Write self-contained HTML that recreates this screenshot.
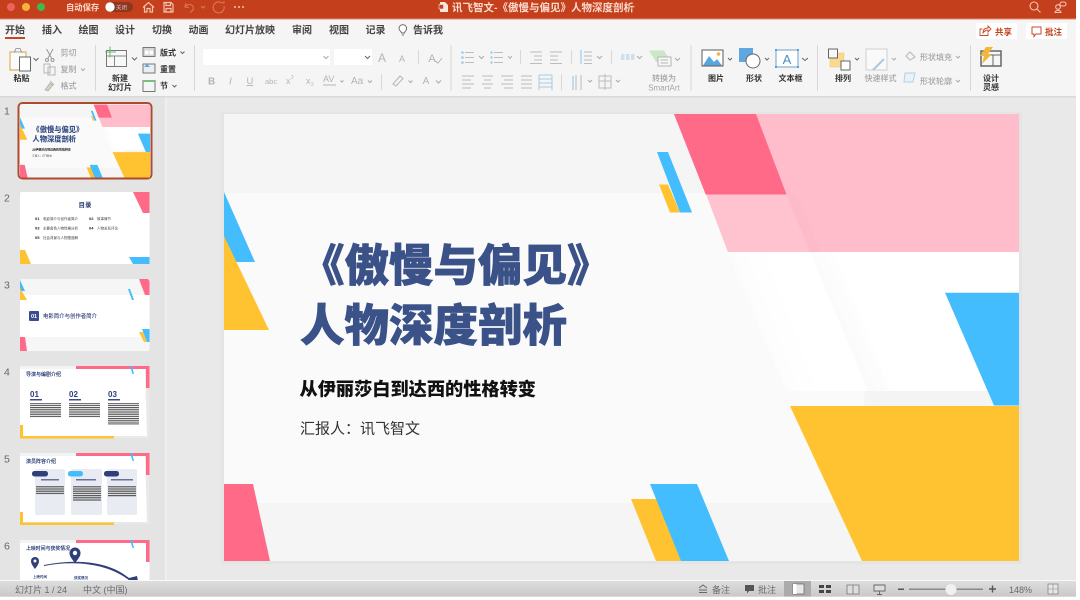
<!DOCTYPE html>
<html lang="zh-CN">
<head>
<meta charset="utf-8">
<title>讯飞智文</title>
<style>
html,body{margin:0;padding:0;width:1080px;height:600px;overflow:hidden;background:#fff}
svg{display:block;position:absolute;left:0;top:0}
text{font-family:"Liberation Sans","Noto Sans CJK SC",sans-serif}
.ui{filter:blur(.35px)}
.soft{filter:blur(.3px)}
.tab{font-size:10px;fill:#444;font-weight:700}
.lb{font-size:8px;fill:#333;font-weight:700;text-anchor:middle}
.gr{font-size:8px;fill:#a4a4a4;font-weight:500}
.ic{fill:none;stroke:#9a9a9a;stroke-width:1}
.lt{fill:none;stroke:#b5b5b5;stroke-width:1}
.dk{fill:none;stroke:#666;stroke-width:1}
.ch{fill:none;stroke:#666;stroke-width:1}
.chl{fill:none;stroke:#aaa;stroke-width:1}
.sep{stroke:#d8d8d8;stroke-width:1;fill:none}
.st{font-size:9px;fill:#6a6a6a}
.th{font-weight:700;fill:#2f3f78}
</style>
</head>
<body>
<svg width="1080" height="600" viewBox="0 0 1080 600" xmlns="http://www.w3.org/2000/svg">
<defs>
<linearGradient id="sb" x1="0" y1="0" x2="0" y2="1"><stop offset="0" stop-color="#dedede"/><stop offset="1" stop-color="#c9c9c9"/></linearGradient>
<linearGradient id="wg" gradientUnits="userSpaceOnUse" x1="725" y1="330" x2="790" y2="305"><stop offset="0" stop-color="#fafafb"/><stop offset="1" stop-color="#ffffff"/></linearGradient>
<linearGradient id="sh" gradientUnits="userSpaceOnUse" x1="812" y1="330" x2="868" y2="305"><stop offset="0" stop-color="#f7f7f7"/><stop offset="1" stop-color="#ffffff"/></linearGradient>
<pattern id="tl" width="3" height="2.200" patternUnits="userSpaceOnUse"><rect width="3" height="1.200" fill="#555"/></pattern>
<clipPath id="c6"><rect x="20" y="540" width="129.500" height="41"/></clipPath>
</defs>

<rect width="1076" height="597" fill="#e9e9e9"/>

<!-- main slide -->
<rect x="221" y="112" width="801" height="452" fill="#e3e3e3" opacity=".7" class="ui"/>
<g>
<rect x="224" y="114" width="795" height="447" fill="#f5f5f6"/>
<rect x="224" y="193" width="640" height="310" fill="#fafafb"/>
<polygon points="674,114 1019,114 1019,252 728,252 706,194" fill="#ffbccb"/>
<polygon points="706,194 786,194 810,252 728,252" fill="#ffc2cf"/>
<polygon points="787,194 797,194 820,252 810,252" fill="#fcb9c8" opacity=".6"/>
<polygon points="674,114 756,114 786.5,194.5 705.7,194.5" fill="#ff6a88"/>
<polygon points="728,252 1019,252 1019,391 786,391" fill="url(#wg)"/>
<polygon points="810,252 835,252 890,391 868,391" fill="url(#sh)"/>
<polygon points="866,391 1019,391 1019,406 873,406" fill="#f4f4f5"/>
<polygon points="945,292.700 1019,292.700 1019,405.500 994,405.500" fill="#44bdff"/>
<polygon points="790,406 1019,406 1019,561 862,561" fill="#ffc331"/>
<polygon points="631,499 660,499 681,561 656,561" fill="#ffc331"/>
<polygon points="650,484 697,484 729,561 681,561" fill="#44bdff"/>
<polygon points="659,184.500 668,184.500 680,212.500 670,212.500" fill="#ffc331"/>
<polygon points="657,152 668,152 692,212.500 680,212.500" fill="#44bdff"/>
<polygon points="224,192 255,262 224,262" fill="#44bdff"/>
<polygon points="224,236 269,330 224,330" fill="#ffc331"/>
<polygon points="224,484 253,484 270,561 224,561" fill="#ff6a88"/>
<g class="soft">
<g font-weight="900" fill="#3a5288" stroke="#3a5288" stroke-width=".7" font-size="44.500">
<text x="300" y="281">《傲慢与偏见》</text>
<text x="300" y="341">人物深度剖析</text>
</g>
<text x="299.500" y="395.500" font-size="18.200" font-weight="900" fill="#111">从伊丽莎白到达西的性格转变</text>
<text x="300" y="433.500" font-size="15" fill="#333">汇报人<tspan style="font-family:'Noto Sans CJK TC',sans-serif">：</tspan>讯飞智文</text>
</g>
</g>

<g class="ui">
<!-- title bar -->
<rect width="1076" height="18.500" fill="#c43f1b"/>
<rect y="18.500" width="1076" height="1" fill="#e98a6d"/>
<circle cx="11" cy="7" r="4" fill="#f0625c"/>
<circle cx="26" cy="7" r="4" fill="#f5b33b"/>
<circle cx="41" cy="7" r="4" fill="#3fb94d"/>
<text x="66" y="10.500" font-size="8.300" fill="#ffd9cb" font-weight="700">自动保存</text>
<rect x="105" y="2" width="28" height="10" rx="5" fill="#8c3722"/>
<circle cx="110" cy="7" r="4.700" fill="#fff"/>
<text x="116" y="9.300" font-size="5.500" fill="#e9c7bb">关闭</text>
<g fill="none" stroke="#f6c3b0" stroke-width="1.200">
<path d="M143 7.500 L148.500 2.500 L154 7.500 M144.500 6.500 V12 H147 V8.500 H150 V12 H152.500 V6.500"/>
<path d="M164 2.500 H171 L173 4.500 V12 H164 Z M166 2.500 V5.500 H170.500 V2.500 M166 12 V8.500 H171 V12"/>
</g>
<g fill="none" stroke="#d9795a" stroke-width="1.100">
<path d="M186 3 L185 7 L189 7.500 M185.500 6.500 C189 2.500 195 5 193 10 L190 12.500"/>
<path d="M201 6 L203 8 L205 6"/>
<path d="M224 6 A5.500 5.500 0 1 1 222 3 L224 3 M224 1 V3.500"/>
</g>
<g fill="#f4c5b4"><circle cx="235" cy="7" r="1"/><circle cx="239" cy="7" r="1"/><circle cx="243" cy="7" r="1"/></g>
<path d="M440 2 H445 L448 5 V12 H440 Z" fill="#fbe6dd"/>
<rect x="439" y="4.500" width="4.500" height="4.500" fill="#c43f1b" stroke="#fbe6dd" stroke-width=".6"/>
<text x="452" y="10.800" font-size="10.500" fill="#fbdccf" font-weight="700">讯飞智文-《傲慢与偏见》人物深度剖析</text>
<path d="M629 6 L632 8.500 L635 6" fill="none" stroke="#d9795a"/>
<g fill="none" stroke="#f4c5b4" stroke-width="1.100">
<circle cx="1034" cy="6" r="4"/><path d="M1037 9 L1040.500 12.500"/>
<circle cx="1058" cy="7" r="2.300"/><path d="M1055 12.500 C1055 9.800 1061 9.800 1061 12.500 Z"/>
<rect x="1060" y="2" width="6" height="4" rx="2"/>
</g>

<!-- ribbon -->
<rect y="19.500" width="1076" height="77" fill="#f5f5f5"/>
<rect y="96" width="1076" height="1.500" fill="#d9d9d9"/>
<text x="5" y="33.500" class="tab">开始</text>
<text x="42" y="33.500" class="tab">插入</text>
<text x="78.500" y="33.500" class="tab">绘图</text>
<text x="115" y="33.500" class="tab">设计</text>
<text x="152" y="33.500" class="tab">切换</text>
<text x="188.500" y="33.500" class="tab">动画</text>
<text x="225" y="33.500" class="tab">幻灯片放映</text>
<text x="292" y="33.500" class="tab">审阅</text>
<text x="329" y="33.500" class="tab">视图</text>
<text x="365.500" y="33.500" class="tab">记录</text>
<text x="413" y="33.500" class="tab">告诉我</text>
<rect x="5" y="37" width="20" height="2" fill="#c8452a"/>
<path d="M402 35 H404 M401.500 33 C401.500 31 399 31 399 28.500 A3.800 3.800 0 1 1 406.600 28.500 C406.600 31 404.500 31 404.500 33 Z" fill="#fff" stroke="#666" stroke-width=".9"/>

<rect x="976" y="23" width="41" height="16" fill="#fff" rx="1"/>
<rect x="1026" y="23" width="41" height="16" fill="#fff" rx="1"/>
<path d="M982.500 29 H980 V35.500 H988 V33 M983 33 C983 29.500 985 28 988 28 V26 L991 29 L988 32 V30 C986 30 984.500 31 983 33Z" fill="none" stroke="#c8492c" stroke-width=".9"/>
<text x="995" y="35" font-size="8.500" font-weight="700" fill="#c4401c">共享</text>
<path d="M1032 27 H1041 V34 H1036 L1034 36.500 V34 H1032 Z" fill="none" stroke="#c8492c" stroke-width="1"/>
<text x="1045" y="35" font-size="8.500" font-weight="700" fill="#c4401c">批注</text>

<line class="sep" x1="95.500" y1="45" x2="95.500" y2="91"/>
<line class="sep" x1="194.500" y1="45" x2="194.500" y2="91"/>
<line class="sep" x1="451" y1="45" x2="451" y2="91"/>
<line class="sep" x1="691" y1="45" x2="691" y2="91"/>
<line class="sep" x1="817.500" y1="45" x2="817.500" y2="91"/>
<line class="sep" x1="970.500" y1="45" x2="970.500" y2="91"/>

<!-- clipboard -->
<path d="M10 52 H15 L16 50 H20 L21 52 H26 V70 H10 Z" fill="#fbfbfb" stroke="#e5b05a" stroke-width="1.200"/>
<path d="M14.500 52 L16 48.500 H20 L21.500 52 Z" fill="#f4f4f4" stroke="#888" stroke-width=".8"/>
<rect x="19.500" y="57" width="11" height="14" fill="#fff" stroke="#666" stroke-width="1"/>
<path class="ch" d="M33.500 58 L36 60.500 L38.500 58"/>
<text class="lb" x="21.500" y="81">粘贴</text>
<path class="ic" d="M46.500 49 L52 59 M53 49 L47.500 59"/><circle class="ic" cx="47" cy="60" r="1.500"/><circle class="ic" cx="52.500" cy="60" r="1.500"/>
<path class="lt" d="M44 64 H50 V73 H44 Z M48 67 H55 V75 H48 Z"/>
<path d="M45 90 L50 83 L53 85 L48 91 Z" fill="#d9d0b8" stroke="#aaa" stroke-width=".7"/><path class="lt" d="M50 81 L54 85"/>
<text class="gr" x="60.500" y="55.500">剪切</text>
<text class="gr" x="60.500" y="72">复制</text>
<text class="gr" x="60.500" y="88.500">格式</text>
<path class="chl" d="M81 68.500 L83 70.500 L85 68.500"/>

<!-- new slide -->
<rect x="106.500" y="50.500" width="20" height="16" fill="#f8f8f8" stroke="#777" stroke-width="1"/>
<path d="M106.500 56 H126.500 M114.500 56 V66.500" stroke="#888" fill="none"/>
<path d="M110 46.500 V57.500 M105 52 H116" stroke="#6cc070" stroke-width="1.100"/>
<path class="ch" d="M132 57.500 L134.500 60 L137 57.500"/>
<text class="lb" x="120" y="81">新建</text>
<text class="lb" x="120" y="90">幻灯片</text>
<rect x="143" y="47.500" width="12" height="9" fill="#d5d5d5" stroke="#777"/>
<rect x="145" y="50.500" width="3.500" height="4" fill="#fff"/><rect x="149.500" y="50.500" width="3.500" height="4" fill="#fff"/>
<rect x="143" y="64" width="12" height="9" fill="#e8eef2" stroke="#777"/>
<path d="M144 67 L147 64 L150 67 Z" fill="#57a9db"/>
<rect x="143" y="80.500" width="12" height="11" fill="#f4f4f4" stroke="#777"/>
<rect x="143" y="80" width="12" height="2" fill="#74c07c"/>
<text x="160" y="55.500" font-size="8" font-weight="700" fill="#333">版式</text>
<text x="160" y="72" font-size="8" font-weight="700" fill="#333">重置</text>
<text x="160" y="88.500" font-size="8" font-weight="700" fill="#333">节</text>
<path class="ch" d="M180.500 51.500 L182.500 53.500 L184.500 51.500"/>
<path class="ch" d="M172.500 85 L174.500 87 L176.500 85"/>

<!-- font -->
<rect x="203" y="49" width="127" height="16" rx="1.500" fill="#fff"/>
<rect x="334" y="49" width="38" height="16" rx="1.500" fill="#fff"/>
<path class="chl" d="M323.500 56 L326 58.500 L328.500 56"/>
<path class="ch" d="M365 56 L367.500 58.500 L370 56"/>
<g fill="#b4b4b4">
<text x="378" y="62" font-size="12">A</text>
<text x="399" y="62" font-size="9">A</text>
<text x="208" y="84.500" font-size="10" font-weight="700">B</text>
<text x="229" y="84.500" font-size="10" font-style="italic">I</text>
<text x="246.500" y="84" font-size="9.500" text-decoration="underline">U</text>
<text x="265" y="84" font-size="7.500">abc</text>
<text x="286" y="84" font-size="9">x</text><text x="291" y="79" font-size="5">2</text>
<text x="306" y="84" font-size="9">x</text><text x="311" y="86" font-size="5">2</text>
<text x="323" y="82" font-size="9">AV</text>
<text x="351" y="84" font-size="10">Aa</text>
<text x="426" y="84" font-size="10" text-anchor="middle">A</text>
<text x="432" y="62" font-size="11" text-anchor="middle">A</text>
</g>
<path class="lt" d="M323 85 H336"/>
<path class="chl" d="M340.500 80.500 L342 82 L343.500 80.500"/>
<path class="chl" d="M368 80.500 L370 82.500 L372 80.500"/>
<path class="sep" d="M418.500 50 V64 M381.500 74 V90"/>
<path class="lt" d="M393 84 L400 76 L403 78.500 L396 86 Z"/>
<path class="chl" d="M408.500 80.500 L410.500 82.500 L412.500 80.500"/>
<path class="chl" d="M436 80.500 L438.500 83 L441 80.500"/>
<path class="lt" d="M434 60 L438 63 L442 58"/>

<!-- paragraph -->
<g stroke="#bcbcbc" stroke-width="1" fill="none">
<path d="M465 52.500 H474 M465 57.500 H474 M465 62.500 H474"/>
<path d="M494 52.500 H503 M494 57.500 H503 M494 62.500 H503"/>
<path d="M530 52 H542 M534 56 H542 M534 60 H542 M530 63.500 H542"/>
<path d="M550 52 H562 M550 56 H558 M550 60 H558 M550 63.500 H562"/>
<path d="M584 52 H592 M584 56 H592 M584 60 H592 M584 63.500 H592"/>
<path d="M462 76 H474 M462 80 H471 M462 84 H474 M462 88 H471"/>
<path d="M482 76 H493 M484 80 H491 M482 84 H493 M484 88 H491"/>
<path d="M501 76 H513 M504 80 H513 M501 84 H513 M504 88 H513"/>
<path d="M521 76 H532 M521 80 H532 M521 84 H532 M521 88 H532"/>
<path d="M576 75 V90 M581 90 V75"/>
<rect x="599" y="76" width="12" height="12"/><path d="M605 74 V90 M599 81 H611"/>
</g>
<g fill="#9ccbe9"><circle cx="462.500" cy="52.500" r="1.300"/><circle cx="462.500" cy="57.500" r="1.300"/><circle cx="462.500" cy="62.500" r="1.300"/><circle cx="491.500" cy="52.500" r="1.200"/><circle cx="491.500" cy="57.500" r="1.200"/><circle cx="491.500" cy="62.500" r="1.200"/></g>
<path d="M539 75 H552 M539 79 H552 M539 83 H552 M539 87 H552 M539 75 V90 M552 75 V90" stroke="#a6cbe4" fill="none"/>
<path d="M581 50 V64" stroke="#8cc4e6"/>
<path d="M573 76 V90" stroke="#8cc4e6"/>
<g class="chl"><path d="M479 56 L481.500 58.500 L484 56"/><path d="M508 56 L510 58.500 L512 56"/><path d="M597 56 L599.500 58.500 L602 56"/><path d="M588 80 L590 82 L592 80"/><path d="M616 80 L618 82 L620 80"/><path d="M637 56 L639.500 58.500 L642 56"/></g>
<path class="sep" d="M520.500 50 V64 M571.500 50 V64 M611.500 50 V64 M561.500 74 V90"/>
<g fill="#cfe0ec"><rect x="621" y="54" width="3.500" height="6"/><rect x="626" y="54" width="3.500" height="6"/><rect x="631" y="54" width="3.500" height="6"/></g>
<path d="M649 50.500 H664 L671 62 H656 Z" fill="#cde5c9"/>
<rect x="658" y="57" width="13" height="9" fill="#f7f7f7" stroke="#b5b5b5"/>
<path class="lt" d="M660.500 60 H668 M660.500 63 H668"/>
<path class="chl" d="M675 58 L677.500 60.500 L680 58"/>
<text class="gr" x="664" y="81" text-anchor="middle">转换为</text>
<text class="gr" x="664" y="90.500" text-anchor="middle">SmartArt</text>

<!-- insert -->
<rect x="702" y="50" width="21" height="16" fill="#fff" stroke="#5a5a5a"/>
<path d="M703 65.500 L709 56 L714 62 L717 59 L722 65.500 Z" fill="#5aa6dc"/>
<circle cx="718.500" cy="54" r="1.800" fill="#f2b04a"/>
<path class="ch" d="M728 58 L730 60 L732 58"/>
<text class="lb" x="716" y="81">图片</text>
<rect x="739" y="48" width="14" height="14" fill="#5ea7e0"/>
<circle cx="753" cy="61" r="7" fill="#fff" stroke="#666"/>
<path class="ch" d="M765 58 L767 60 L769 58"/>
<text class="lb" x="754" y="81">形状</text>
<rect x="776" y="50" width="22" height="17" fill="#fff" stroke="#6aa2cc"/>
<g fill="#5b9fd4"><rect x="775" y="49" width="2" height="2"/><rect x="797" y="49" width="2" height="2"/><rect x="775" y="66" width="2" height="2"/><rect x="797" y="66" width="2" height="2"/></g>
<text x="787" y="64" font-size="13" text-anchor="middle" fill="#4a8fc9">A</text>
<path class="ch" d="M802 58 L805 60.500 L808 58"/>
<text class="lb" x="790.500" y="81">文本框</text>

<!-- arrange -->
<rect x="830" y="53" width="14" height="14" fill="#f8d98f" stroke="#e9c56e" stroke-width=".5"/>
<rect x="828.500" y="49" width="9" height="9" fill="#f7f7f7" stroke="#666"/>
<rect x="841" y="61" width="9" height="9" fill="#fff" stroke="#666"/>
<path class="ch" d="M855 58 L857 60 L859 58"/>
<text class="lb" x="843" y="81">排列</text>
<rect x="866" y="49" width="21" height="21" fill="#f9f9f9" stroke="#cfcfcf"/>
<path d="M873 70 L884 59" stroke="#a9c9e3" stroke-width="2"/>
<path class="chl" d="M892 58 L894 60 L896 58"/>
<text class="gr" x="880.500" y="81" text-anchor="middle">快速样式</text>
<path class="lt" d="M906 56 L910 52 L915 57 L910 60 Z"/>
<path d="M905 73 H915 L913 82 H904 Z" fill="#e9f2f8" stroke="#b7cfdf"/>
<text class="gr" x="920" y="60">形状填充</text>
<text class="gr" x="920" y="84">形状轮廓</text>
<path class="chl" d="M956 56 L958 58 L960 56"/>
<path class="chl" d="M956 80 L958 82 L960 80"/>

<!-- designer -->
<rect x="981" y="51" width="20" height="15" fill="#f7f7f7" stroke="#666" stroke-width="1.500"/>
<path d="M981 55 H1001 M993 55 V66" stroke="#666"/>
<path d="M986 47 H993 L988 54 H992 L982 64 L984 56 H980 Z" fill="#f3b63d"/>
<text class="lb" x="991" y="81">设计</text>
<text class="lb" x="991" y="90">灵感</text>

<!-- sidebar -->
<rect y="97.500" width="165" height="484" fill="#e4e4e4"/>
<rect x="165" y="97.500" width="2" height="484" fill="#efefef"/>
<g font-size="10.500" fill="#666">
<text x="4" y="114.500">1</text><text x="4" y="201.500">2</text><text x="4" y="288.500">3</text><text x="4" y="375.500">4</text><text x="4" y="462.500">5</text><text x="4" y="549.500">6</text>
</g>

<!-- thumb 1 -->
<rect x="18.500" y="103" width="133" height="75.500" rx="4" fill="#fff" stroke="#ae4a2e" stroke-width="2"/>
<svg x="20" y="104.500" width="130" height="73" viewBox="224 114 795 447" preserveAspectRatio="none">
<rect x="224" y="114" width="795" height="447" fill="#f5f5f6"/>
<rect x="224" y="193" width="640" height="310" fill="#fafafb"/>
<polygon points="674,114 1019,114 1019,252 728,252 706,194" fill="#ffbccb"/>
<polygon points="674,114 756,114 786.500,194.500 705.700,194.500" fill="#ff6a88"/>
<polygon points="728,252 1019,252 1019,391 786,391" fill="url(#wg)"/>
<polygon points="866,391 1019,391 1019,406 873,406" fill="#f4f4f5"/>
<polygon points="945,292.700 1019,292.700 1019,405.500 994,405.500" fill="#44bdff"/>
<polygon points="790,406 1019,406 1019,561 862,561" fill="#ffc331"/>
<polygon points="631,499 660,499 681,561 656,561" fill="#ffc331"/>
<polygon points="650,484 697,484 729,561 681,561" fill="#44bdff"/>
<polygon points="659,184.500 668,184.500 680,212.500 670,212.500" fill="#ffc331"/>
<polygon points="657,152 668,152 692,212.500 680,212.500" fill="#44bdff"/>
<polygon points="224,192 255,262 224,262" fill="#44bdff"/>
<polygon points="224,236 269,330 224,330" fill="#ffc331"/>
<polygon points="224,484 253,484 270,561 224,561" fill="#ff6a88"/>
<g font-weight="900" fill="#3a5288" font-size="44.500"><text x="300" y="281">《傲慢与偏见》</text><text x="300" y="341">人物深度剖析</text></g>
<text x="299" y="395" font-size="18.200" font-weight="700" fill="#111">从伊丽莎白到达西的性格转变</text>
<text x="300" y="433" font-size="15" fill="#333">汇报人：讯飞智文</text>
</svg>

<!-- thumb 2 -->
<rect x="20" y="192" width="129.500" height="72" rx="2" fill="#fff"/>
<polygon points="133,192 149.500,192 149.500,213 143,213" fill="#ff6a88"/>
<polygon points="20,250 25,250 31,264 20,264" fill="#ffc331"/>
<polygon points="129,257 149.500,257 149.500,264 133,264" fill="#44bdff"/>
<text x="85" y="207" class="th" font-size="6.500" text-anchor="middle">目录</text>
<g font-size="4" fill="#222">
<text x="35" y="220" font-weight="700">01</text><text x="43" y="220" font-size="3.500" fill="#444">电影简介与创作者简介</text>
<text x="89" y="220" font-weight="700">02</text><text x="97" y="220" font-size="3.500" fill="#444">故事情节</text>
<text x="35" y="229.500" font-weight="700">03</text><text x="43" y="229.500" font-size="3.500" fill="#444">主要角色人物性格分析</text>
<text x="89" y="229.500" font-weight="700">04</text><text x="97" y="229.500" font-size="3.500" fill="#444">人物关系评论</text>
<text x="35" y="239" font-weight="700">05</text><text x="43" y="239" font-size="3.500" fill="#444">社会背景与人物塑造解</text>
</g>

<!-- thumb 3 -->
<rect x="20" y="279" width="129.500" height="72" rx="2" fill="#f6f6f6"/>
<rect x="20" y="295" width="129.500" height="42" fill="#fff"/>
<polygon points="139,279 148,279 149.500,281 149.500,295 145,295" fill="#ff6a88"/>
<polygon points="20,280 25,291 20,291" fill="#44bdff"/>
<polygon points="20,288 27,300 20,300" fill="#ffc331"/>
<polygon points="128,289 130,289 134,300 132,300" fill="#44bdff"/>
<polygon points="139,332 143,332 147,342 144,342" fill="#ffc331"/>
<polygon points="142,329 149.500,329 149.500,342 147,342" fill="#44bdff"/>
<polygon points="20,337 25,337 27,351 20,351" fill="#ff6a88"/>
<rect x="29" y="311" width="10" height="10" rx="1" fill="#3a4c8a"/>
<text x="34" y="318" font-size="5.500" fill="#fff" font-weight="700" text-anchor="middle">01</text>
<text x="43" y="317.800" font-size="5.400" font-weight="500" fill="#2f3f78">电影简介与创作者简介</text>

<!-- thumb 4 -->
<rect x="20" y="366" width="129.500" height="72" fill="#e9e9e9"/>
<polygon points="20,369 145,369 147,436 20,436" fill="#fff"/>
<rect x="20" y="366" width="56" height="3" fill="#f3f3f3"/>
<rect x="76" y="366" width="73.500" height="3" fill="#ff6a88"/>
<rect x="146" y="366" width="3.500" height="22" fill="#ff6a88"/>
<polygon points="130,366 132,366 134,374 132.500,374" fill="#44bdff"/>
<rect x="20" y="425" width="3" height="13" fill="#ffc331"/>
<rect x="20" y="436" width="94" height="2.500" fill="#ffc331"/>
<text x="26" y="376" font-size="5" class="th">导演与编剧介绍</text>
<g font-size="8" class="th" fill="#34508f">
<text x="30" y="397">01</text><text x="69" y="397">02</text><text x="108" y="397">03</text>
</g>
<rect x="30" y="399" width="12" height="1.500" fill="#3a4c8a"/><rect x="69" y="399" width="12" height="1.500" fill="#3a4c8a"/><rect x="108" y="399" width="12" height="1.500" fill="#3a4c8a"/>
<rect x="30" y="403" width="31" height="15" fill="url(#tl)"/>
<rect x="69" y="403" width="31" height="15" fill="url(#tl)"/>
<rect x="108" y="403" width="31" height="22" fill="url(#tl)"/>

<!-- thumb 5 -->
<rect x="20" y="453" width="129.500" height="71" fill="#e9e9e9"/>
<polygon points="20,456 145,456 147,522 20,522" fill="#fff"/>
<rect x="20" y="453" width="56" height="3" fill="#f3f3f3"/>
<rect x="76" y="453" width="73.500" height="3" fill="#ff6a88"/>
<rect x="146" y="453" width="3.500" height="22" fill="#ff6a88"/>
<polygon points="130,453 132,453 134,461 132.500,461" fill="#44bdff"/>
<rect x="20" y="512" width="3" height="13" fill="#ffc331"/>
<rect x="20" y="522.500" width="94" height="2.500" fill="#ffc331"/>
<text x="26" y="463" font-size="5" class="th">演员阵容介绍</text>
<g fill="#e9ebf3">
<rect x="35" y="469" width="30" height="46" rx="2"/><rect x="71" y="469" width="31" height="46" rx="2"/><rect x="107" y="469" width="30" height="46" rx="2"/>
</g>
<rect x="32" y="471" width="16" height="5.500" rx="2.500" fill="#2f3f78"/>
<rect x="68" y="471" width="15" height="5.500" rx="2.500" fill="#44bdff"/>
<rect x="104" y="471" width="15" height="5.500" rx="2.500" fill="#2f3f78"/>
<g fill="#2f3f78" opacity=".7"><rect x="41" y="479" width="18" height="1.500"/><rect x="76" y="479" width="20" height="1.500"/><rect x="111" y="479" width="22" height="1.500"/></g>
<rect x="36" y="486" width="28" height="9" fill="url(#tl)"/><rect x="73" y="486" width="28" height="15" fill="url(#tl)"/><rect x="108" y="486" width="28" height="11" fill="url(#tl)"/>

<!-- thumb 6 -->
<g clip-path="url(#c6)">
<rect x="20" y="540" width="129.500" height="60" fill="#fff"/>
<rect x="20" y="540" width="56" height="3" fill="#f3f3f3"/>
<rect x="76" y="540" width="73.500" height="3" fill="#ff6a88"/>
<rect x="146" y="540" width="3.500" height="22" fill="#ff6a88"/>
<polygon points="130,540 132,540 134,548 132.500,548" fill="#44bdff"/>
<text x="26" y="550" font-size="4.900" class="th">上映时间与获奖情况</text>
<path d="M44 566 C80 559 112 566 130 581 L138 581 L137 576 L129 578 C110 562 78 558 44 565 Z" fill="#2f3f78"/>
<path d="M35 569 C32 565 31 563 31 561 A4 4 0 0 1 39 561 C39 563 38 565 35 569 Z" fill="#2f3f78"/>
<circle cx="35" cy="561" r="1.500" fill="#fff"/>
<path d="M75 563 C71 558 69.500 556 69.500 553 A5.500 5.500 0 0 1 80.500 553 C80.500 556 79 558 75 563 Z" fill="#2f3f78"/>
<circle cx="75" cy="553" r="2.200" fill="#fff"/>
<text x="33" y="578" font-size="3.500" fill="#2f3f78" font-weight="700">上映时间</text>
<text x="74" y="579" font-size="3.500" fill="#2f3f78" font-weight="700">获奖情况</text>
</g>

<!-- status bar -->
<rect y="580" width="1076" height="1" fill="#f8f8f8"/>
<rect y="581" width="1076" height="15.500" fill="url(#sb)"/>
<text class="st" x="15" y="593">幻灯片 1 / 24</text>
<text class="st" x="83" y="593">中文 (中国)</text>
<path d="M699 588 L703 585 L707 588 M699 590 H707 M699 592.500 H707" class="dk" stroke-width=".8"/>
<text class="st" x="712" y="593">备注</text>
<path d="M745 585 H754 V591 H749 L747 593.500 V591 H745 Z" fill="#555"/>
<text class="st" x="758" y="593">批注</text>
<rect x="784" y="581" width="27" height="15.500" fill="#ababab"/>
<rect x="793" y="584" width="11" height="10" fill="#e8e8e8" stroke="#666" stroke-width=".7"/>
<rect x="793" y="584" width="3.500" height="10" fill="#fff"/>
<g fill="#444"><rect x="819" y="585" width="5" height="3"/><rect x="826" y="585" width="5" height="3"/><rect x="819" y="590" width="5" height="3"/><rect x="826" y="590" width="5" height="3"/></g>
<path d="M847 585 H853 V594 H847 Z M853 585 H859 V594 H853 Z" fill="#ddd" stroke="#777" stroke-width=".8"/>
<path d="M874 585 H885 V591 H874 Z M879.500 591 V594 M877 594.500 H882" fill="#ddd" stroke="#666" stroke-width=".9"/>
<rect x="898" y="588.500" width="6" height="1.500" fill="#555"/>
<rect x="909" y="588.500" width="74" height="1.500" fill="#8a8a8a"/>
<circle cx="951" cy="589.500" r="5.500" fill="#f1f1f1"/>
<path d="M989 589 H996 M992.500 585.500 V592.500" stroke="#555" stroke-width="1.400"/>
<text class="st" x="1009" y="593">148%</text>
<rect x="1048" y="584" width="10" height="10" fill="#e6e6e6" stroke="#888" stroke-width=".8"/>
<path d="M1048 589 H1058 M1053 584 V594" stroke="#888" stroke-width=".6"/>
</g>
</svg>
</body>
</html>
